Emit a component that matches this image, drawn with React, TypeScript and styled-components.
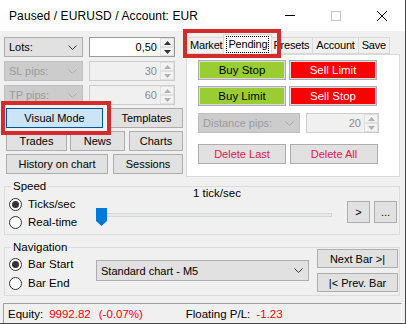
import React from "react";
import styled, { createGlobalStyle } from "styled-components";

const GlobalStyle = createGlobalStyle`
  html, body {
    margin: 0;
    padding: 0;
    background: #fff;
  }
  body {
    font-family: "Liberation Sans", Arial, sans-serif;
    font-size: 11px;
    color: #000;
  }
  * {
    box-sizing: border-box;
  }
`;

const Window = styled.div`
  position: relative;
  width: 406px;
  height: 324px;
  background: #f0f0f0;
  border-right: 1px solid #4a4a4a;
  border-bottom: 1px solid #4a4a4a;
  display: flex;
  flex-direction: column;
  overflow: hidden;
`;

const TitleBar = styled.div`
  height: 31px;
  flex-shrink: 0;
  background: #fff;
  display: flex;
  align-items: center;
`;

const Title = styled.div`
  flex: 1;
  padding-left: 9px;
  font-size: 12px;
  letter-spacing: 0.1px;
`;

const CaptionButton = styled.div`
  width: 46px;
  height: 31px;
  display: flex;
  align-items: center;
  justify-content: center;
`;

const TopArea = styled.div`
  display: flex;
  padding-top: 3px;
  flex-shrink: 0;
`;

const LeftPane = styled.div`
  width: 179px;
  margin-left: 4px;
  padding-top: 3px;
  display: flex;
  flex-direction: column;
  gap: 4px;
`;

const FieldRow = styled.div`
  display: flex;
  gap: ${(p: { $gap?: number }) => p.$gap ?? 6}px;
  height: 20px;
`;

const ComboBox = styled.div<{ $w: number; $h?: number; $disabled?: boolean }>`
  width: ${(p) => p.$w}px;
  height: ${(p) => p.$h ?? 20}px;
  display: flex;
  align-items: center;
  justify-content: space-between;
  padding: 0 5px 0 4px;
  background: ${(p) => (p.$disabled ? "#cccccc" : "#e1e1e1")};
  border: 1px solid ${(p) => (p.$disabled ? "#bfbfbf" : "#adadad")};
  color: ${(p) => (p.$disabled ? "#9b9b9b" : "#000")};
`;

const NumBox = styled.div<{ $w: number; $disabled?: boolean }>`
  width: ${(p) => p.$w}px;
  height: 20px;
  display: flex;
  background: ${(p) => (p.$disabled ? "#f0f0f0" : "#fff")};
  border: 1px solid ${(p) => (p.$disabled ? "#cccccc" : "#9a9a9a")};
  color: ${(p) => (p.$disabled ? "#8a8a8a" : "#000")};
`;

const NumValue = styled.div`
  flex: 1;
  text-align: right;
  padding-right: 3px;
  line-height: 18px;
`;

const Spin = styled.div`
  width: 14px;
  display: flex;
  flex-direction: column;
`;

const SpinHalf = styled.div`
  flex: 1;
  display: flex;
  align-items: center;
  justify-content: center;
  background: #f3f3f3;
  border: 1px solid #e0e0e0;
`;

const ButtonBlock = styled.div`
  margin: -1px 0 0 2px;
  display: flex;
  flex-direction: column;
  gap: 3px;
`;

const ButtonRow = styled.div`
  display: flex;
  height: 20px;
`;

const Button = styled.div<{ $w: number; $h?: number; $ml?: number; $color?: string; $active?: boolean }>`
  width: ${(p) => p.$w}px;
  height: ${(p) => p.$h ?? 20}px;
  margin-left: ${(p) => p.$ml ?? 0}px;
  flex-shrink: 0;
  display: flex;
  align-items: center;
  justify-content: center;
  background: ${(p) => (p.$active ? "#cce4f7" : "#e1e1e1")};
  border: 1px solid ${(p) => (p.$active ? "#005499" : "#adadad")};
  color: ${(p) => p.$color ?? "#000"};
  white-space: nowrap;
`;

const ColorButton = styled.div<{ $bg: string; $fg: string }>`
  width: 88px;
  height: 20px;
  display: flex;
  align-items: center;
  justify-content: center;
  background: ${(p) => p.$bg};
  color: ${(p) => p.$fg};
  border: 1px solid #adadad;
  box-shadow: inset 0 0 0 1px #dcdcdc;
  font-size: 11.5px;
`;

const RightPane = styled.div`
  width: 214px;
  margin-left: 3px;
  display: flex;
  flex-direction: column;
`;

const TabStrip = styled.div`
  height: 20px;
  display: flex;
  align-items: flex-end;
  padding-left: 1px;
`;

const Tab = styled.div<{ $selected?: boolean }>`
  height: ${(p) => (p.$selected ? 21 : 17)}px;
  margin: ${(p) => (p.$selected ? "0 -2px -1px -3px" : "0 0 0 -1px")};
  padding: ${(p) => (p.$selected ? "2px 3px 0" : "0 3px")};
  position: relative;
  z-index: ${(p) => (p.$selected ? 1 : 0)};
  background: ${(p) => (p.$selected ? "#fff" : "#f0f0f0")};
  border: 1px solid #d9d9d9;
  border-bottom: ${(p) => (p.$selected ? "0" : "1px solid #d9d9d9")};
  line-height: 15px;
  letter-spacing: -0.2px;
  white-space: nowrap;
`;

const FocusLabel = styled.span`
  display: inline-block;
  outline: 1px dotted #000;
  padding: 0 1px;
  line-height: 15px;
`;

const TabPanel = styled.div`
  height: 123px;
  background: #fff;
  border: 1px solid #d9d9d9;
  padding: 5px 0 0 11px;
  display: flex;
  flex-direction: column;
`;

const PanelRow = styled.div<{ $mt?: number; $gap?: number }>`
  display: flex;
  gap: ${(p) => p.$gap ?? 3}px;
  margin-top: ${(p) => p.$mt ?? 0}px;
  height: 20px;
`;

const GroupBox = styled.div<{ $mt: number }>`
  width: 396px;
  height: 49px;
  margin: ${(p) => p.$mt}px 0 0 4px;
  border: 1px solid #dcdcdc;
  display: flex;
  flex-shrink: 0;
`;

const GroupLeft = styled.div`
  width: 91px;
  padding-left: 4px;
  display: flex;
  flex-direction: column;
`;

const GroupCaption = styled.div`
  width: fit-content;
  height: 13px;
  line-height: 13px;
  margin: -7px 0 0 2px;
  padding: 0 2px;
  background: #f0f0f0;
  font-size: 11.5px;
`;

const RadioRow = styled.div<{ $mt: number }>`
  height: 14px;
  margin-top: ${(p) => p.$mt}px;
  display: flex;
  align-items: center;
  gap: 6px;
  font-size: 11.5px;
`;

const RadioCircle = styled.div<{ $checked?: boolean }>`
  width: 13px;
  height: 13px;
  border-radius: 50%;
  border: 1px solid #333;
  background: #fff;
  display: flex;
  align-items: center;
  justify-content: center;
  &::after {
    content: "";
    display: ${(p) => (p.$checked ? "block" : "none")};
    width: 7px;
    height: 7px;
    border-radius: 50%;
    background: #333;
  }
`;

const SliderCol = styled.div`
  width: 236px;
  display: flex;
  flex-direction: column;
`;

const TickLabel = styled.div`
  height: 13px;
  line-height: 13px;
  text-align: center;
  padding-left: 6px;
  font-size: 11.5px;
`;

const SliderBox = styled.div`
  position: relative;
  height: 18px;
  margin-top: 8px;
  padding-top: 5px;
`;

const Track = styled.div`
  height: 4px;
  background: #e7eaea;
  border: 1px solid #d6d6d6;
`;

const Thumb = styled.svg`
  position: absolute;
  left: 0;
  top: 0;
`;

const SmallButtons = styled.div`
  margin-left: 15px;
  padding-top: 14px;
  display: flex;
  gap: 4px;
`;

const NavMiddle = styled.div`
  padding-top: 12px;
`;

const NavButtons = styled.div`
  margin-left: 8px;
  padding-top: 1px;
  display: flex;
  flex-direction: column;
  gap: 5px;
`;

const StatusBar = styled.div`
  width: 399px;
  height: 20px;
  margin: 7px 0 0 3px;
  border-top: 1px solid #a0a0a0;
  border-left: 1px solid #a0a0a0;
  border-right: 1px solid #fff;
  display: flex;
  align-items: center;
  padding-left: 4px;
  flex-shrink: 0;
  font-size: 11.5px;
`;

const StatusItem = styled.span<{ $ml?: number; $red?: boolean; $w?: number }>`
  margin-left: ${(p) => p.$ml ?? 0}px;
  color: ${(p) => (p.$red ? "#ff0000" : "#000")};
  ${(p) => (p.$w ? `width: ${p.$w}px;` : "")}
  white-space: nowrap;
`;

const Highlight = styled.div<{ $x: number; $y: number; $w: number; $h: number }>`
  position: absolute;
  left: ${(p) => p.$x}px;
  top: ${(p) => p.$y}px;
  width: ${(p) => p.$w}px;
  height: ${(p) => p.$h}px;
  border: 4px solid #d42b2b;
  pointer-events: none;
  z-index: 5;
`;

const Chevron = ({ color }: { color: string }) => (
  <svg width="9" height="5" viewBox="0 0 9 5">
    <polyline points="0.5,0.5 4.5,4.5 8.5,0.5" fill="none" stroke={color} strokeWidth="1" />
  </svg>
);

const Arrow = ({ up, color }: { up?: boolean; color: string }) => (
  <svg width="7" height="4" viewBox="0 0 7 4">
    <polygon points={up ? "0,4 3.5,0 7,4" : "0,0 3.5,4 7,0"} fill={color} />
  </svg>
);

function Combo(props: { label: string; w: number; h?: number; disabled?: boolean }) {
  return (
    <ComboBox $w={props.w} $h={props.h} $disabled={props.disabled}>
      <span>{props.label}</span>
      <Chevron color={props.disabled ? "#a8a8a8" : "#333"} />
    </ComboBox>
  );
}

function NumField(props: { value: string; w: number; disabled?: boolean }) {
  const c = props.disabled ? "#b0b0b0" : "#333";
  return (
    <NumBox $w={props.w} $disabled={props.disabled}>
      <NumValue>{props.value}</NumValue>
      <Spin>
        <SpinHalf>
          <Arrow up color={c} />
        </SpinHalf>
        <SpinHalf>
          <Arrow color={c} />
        </SpinHalf>
      </Spin>
    </NumBox>
  );
}

export default function App() {
  return (
    <>
      <GlobalStyle />
      <Window>
        <TitleBar>
          <Title>Paused / EURUSD / Account: EUR</Title>
          <CaptionButton>
            <svg width="10" height="1" viewBox="0 0 10 1">
              <rect width="10" height="1" fill="#000" />
            </svg>
          </CaptionButton>
          <CaptionButton>
            <svg width="10" height="10" viewBox="0 0 10 10">
              <rect x="0.5" y="0.5" width="9" height="9" fill="none" stroke="#c4c4c4" />
            </svg>
          </CaptionButton>
          <CaptionButton>
            <svg width="10" height="10" viewBox="0 0 10 10">
              <path d="M0 0 L10 10 M10 0 L0 10" stroke="#000" strokeWidth="1" />
            </svg>
          </CaptionButton>
        </TitleBar>

        <TopArea>
          <LeftPane>
            <FieldRow>
              <Combo label="Lots:" w={79} />
              <NumField value="0,50" w={86} />
            </FieldRow>
            <FieldRow>
              <Combo label="SL pips:" w={79} disabled />
              <NumField value="30" w={86} disabled />
            </FieldRow>
            <FieldRow>
              <Combo label="TP pips:" w={79} disabled />
              <NumField value="60" w={86} disabled />
            </FieldRow>
            <ButtonBlock>
              <ButtonRow>
                <Button $w={97} $active>Visual Mode</Button>
                <Button $w={73} $ml={7}>Templates</Button>
              </ButtonRow>
              <ButtonRow>
                <Button $w={61}>Trades</Button>
                <Button $w={55} $ml={3}>News</Button>
                <Button $w={54} $ml={4}>Charts</Button>
              </ButtonRow>
              <ButtonRow>
                <Button $w={102}>History on chart</Button>
                <Button $w={70} $ml={5}>Sessions</Button>
              </ButtonRow>
            </ButtonBlock>
          </LeftPane>

          <RightPane>
            <TabStrip>
              <Tab>Market</Tab>
              <Tab $selected>
                <FocusLabel>Pending</FocusLabel>
              </Tab>
              <Tab>Presets</Tab>
              <Tab>Account</Tab>
              <Tab>Save</Tab>
            </TabStrip>
            <TabPanel>
              <PanelRow>
                <ColorButton $bg="#9acd32" $fg="#000">Buy Stop</ColorButton>
                <ColorButton $bg="#ff0000" $fg="#fff">Sell Limit</ColorButton>
              </PanelRow>
              <PanelRow $mt={6}>
                <ColorButton $bg="#9acd32" $fg="#000">Buy Limit</ColorButton>
                <ColorButton $bg="#ff0000" $fg="#fff">Sell Stop</ColorButton>
              </PanelRow>
              <PanelRow $mt={7} $gap={6}>
                <Combo label="Distance pips:" w={102} disabled />
                <NumField value="20" w={73} disabled />
              </PanelRow>
              <PanelRow $mt={11} $gap={4}>
                <Button $w={88} $color="#e0174f">Delete Last</Button>
                <Button $w={88} $color="#e0174f">Delete All</Button>
              </PanelRow>
            </TabPanel>
          </RightPane>
        </TopArea>

        <GroupBox $mt={9}>
          <GroupLeft>
            <GroupCaption>Speed</GroupCaption>
            <RadioRow $mt={4}>
              <RadioCircle $checked />
              Ticks/sec
            </RadioRow>
            <RadioRow $mt={4}>
              <RadioCircle />
              Real-time
            </RadioRow>
          </GroupLeft>
          <SliderCol>
            <TickLabel>1 tick/sec</TickLabel>
            <SliderBox>
              <Track />
              <Thumb width="11" height="18" viewBox="0 0 11 18">
                <polygon points="0,0 11,0 11,13 5.5,18 0,13" fill="#0078d7" />
              </Thumb>
            </SliderBox>
          </SliderCol>
          <SmallButtons>
            <Button $w={23} $h={22}>&gt;</Button>
            <Button $w={23} $h={22}>...</Button>
          </SmallButtons>
        </GroupBox>

        <GroupBox $mt={12}>
          <GroupLeft>
            <GroupCaption>Navigation</GroupCaption>
            <RadioRow $mt={3}>
              <RadioCircle $checked />
              Bar Start
            </RadioRow>
            <RadioRow $mt={5}>
              <RadioCircle />
              Bar End
            </RadioRow>
          </GroupLeft>
          <NavMiddle>
            <Combo label="Standard chart - M5" w={213} h={21} />
          </NavMiddle>
          <NavButtons>
            <Button $w={81} $h={19}>Next Bar &gt;|</Button>
            <Button $w={81} $h={19}>|&lt; Prev. Bar</Button>
          </NavButtons>
        </GroupBox>

        <StatusBar>
          <StatusItem>Equity:</StatusItem>
          <StatusItem $ml={6} $red>9992.82</StatusItem>
          <StatusItem $ml={8} $red $w={87}>(-0.07%)</StatusItem>
          <StatusItem>Floating P/L:</StatusItem>
          <StatusItem $ml={6} $red>-1.23</StatusItem>
        </StatusBar>

        <Highlight $x={1} $y={101} $w={110} $h={34} />
        <Highlight $x={183} $y={29} $w={98} $h={29} />
      </Window>
    </>
  );
}
